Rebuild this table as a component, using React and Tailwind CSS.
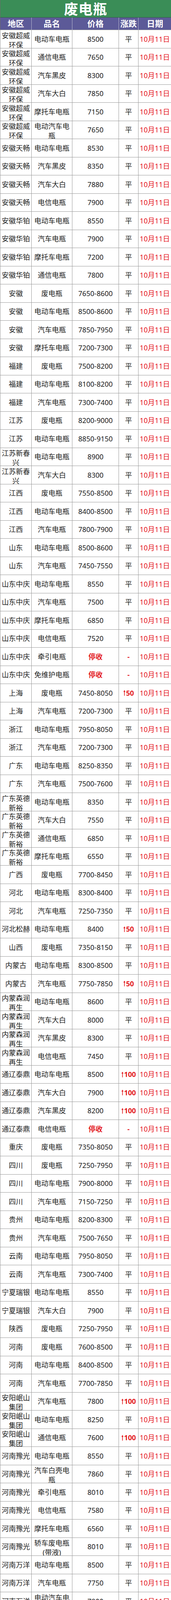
import React from "react";

const rows = [
  ["安徽超威环保", "电动车电瓶", "8500", "平"],
  ["安徽超威环保", "通信电瓶", "7650", "平"],
  ["安徽超威环保", "汽车黑皮", "8300", "平"],
  ["安徽超威环保", "汽车大白", "7850", "平"],
  ["安徽超威环保", "摩托车电瓶", "7150", "平"],
  ["安徽超威环保", "电动汽车电瓶", "7650", "平"],
  ["安徽天畅", "电动车电瓶", "8530", "平"],
  ["安徽天畅", "汽车黑皮", "8350", "平"],
  ["安徽天畅", "汽车大白", "7880", "平"],
  ["安徽天畅", "电信电瓶", "7900", "平"],
  ["安徽华铂", "电动车电瓶", "8550", "平"],
  ["安徽华铂", "汽车电瓶", "7900", "平"],
  ["安徽华铂", "摩托车电瓶", "7200", "平"],
  ["安徽华铂", "通信电瓶", "7800", "平"],
  ["安徽", "废电瓶", "7650-8600", "平"],
  ["安徽", "电动车电瓶", "8500-8600", "平"],
  ["安徽", "汽车电瓶", "7850-7950", "平"],
  ["安徽", "摩托车电瓶", "7200-7300", "平"],
  ["福建", "废电瓶", "7500-8200", "平"],
  ["福建", "电动车电瓶", "8100-8200", "平"],
  ["福建", "汽车电瓶", "7300-7400", "平"],
  ["江苏", "废电瓶", "8200-9000", "平"],
  ["江苏", "电动车电瓶", "8850-9150", "平"],
  ["江苏新春兴", "电动车电瓶", "8900", "平"],
  ["江苏新春兴", "汽车大白", "8300", "平"],
  ["江西", "废电瓶", "7550-8500", "平"],
  ["江西", "电动车电瓶", "8400-8500", "平"],
  ["江西", "汽车电瓶", "7800-7900", "平"],
  ["山东", "电动车电瓶", "8500-8600", "平"],
  ["山东", "汽车电瓶", "7450-7550", "平"],
  ["山东中庆", "电动车电瓶", "8550", "平"],
  ["山东中庆", "汽车电瓶", "7500", "平"],
  ["山东中庆", "摩托车电瓶", "6850", "平"],
  ["山东中庆", "电信电瓶", "7520", "平"],
  ["山东中庆", "牵引电瓶", "停收", "-"],
  ["山东中庆", "免维护电瓶", "停收", "-"],
  ["上海", "废电瓶", "7450-8050", "↑50"],
  ["上海", "汽车电瓶", "7200-7300", "平"],
  ["浙江", "电动车电瓶", "7950-8050", "平"],
  ["浙江", "汽车电瓶", "7200-7300", "平"],
  ["广东", "电动车电瓶", "8250-8350", "平"],
  ["广东", "汽车电瓶", "7500-7600", "平"],
  ["广东英德新裕", "电动车电瓶", "8350", "平"],
  ["广东英德新裕", "汽车大白", "7550", "平"],
  ["广东英德新裕", "通信电瓶", "6850", "平"],
  ["广东英德新裕", "摩托车电瓶", "6550", "平"],
  ["广西", "废电瓶", "7700-8450", "平"],
  ["河北", "电动车电瓶", "8300-8400", "平"],
  ["河北", "汽车电瓶", "7250-7350", "平"],
  ["河北松赫", "电动车电瓶", "8400", "↑50"],
  ["山西", "废电瓶", "7350-8150", "平"],
  ["内蒙古", "电动车电瓶", "8300-8500", "平"],
  ["内蒙古", "汽车电瓶", "7750-7850", "↑50"],
  ["内蒙森润再生", "电动车电瓶", "8600", "平"],
  ["内蒙森润再生", "汽车大白", "8000", "平"],
  ["内蒙森润再生", "汽车黑皮", "8300", "平"],
  ["内蒙森润再生", "电信电瓶", "7450", "平"],
  ["通辽泰鼎", "电动车电瓶", "8500", "↑100"],
  ["通辽泰鼎", "汽车大白", "7900", "↑100"],
  ["通辽泰鼎", "汽车黑皮", "8200", "↑100"],
  ["通辽泰鼎", "电信电瓶", "停收", "-"],
  ["重庆", "废电瓶", "7350-8050", "平"],
  ["四川", "废电瓶", "7250-7950", "平"],
  ["四川", "电动车电瓶", "7900-8000", "平"],
  ["四川", "汽车电瓶", "7150-7250", "平"],
  ["贵州", "电动车电瓶", "8200-8300", "平"],
  ["贵州", "汽车电瓶", "7500-7650", "平"],
  ["云南", "电动车电瓶", "7950-8050", "平"],
  ["云南", "汽车电瓶", "7300-7400", "平"],
  ["宁夏瑞银", "电动车电瓶", "8550", "平"],
  ["宁夏瑞银", "汽车大白", "7900", "平"],
  ["陕西", "废电瓶", "7250-7950", "平"],
  ["河南", "废电瓶", "7600-8500", "平"],
  ["河南", "电动车电瓶", "8400-8500", "平"],
  ["河南", "汽车电瓶", "7700-7850", "平"],
  ["安阳岷山集团", "汽车电瓶", "7800", "↑100"],
  ["安阳岷山集团", "电动车电瓶", "8250", "平"],
  ["安阳岷山集团", "通信电瓶", "7600", "↑100"],
  ["河南豫光", "电动车电瓶", "8550", "平"],
  ["河南豫光", "汽车白壳电瓶", "7860", "平"],
  ["河南豫光", "牵引电瓶", "8010", "平"],
  ["河南豫光", "电信电瓶", "7580", "平"],
  ["河南豫光", "摩托车电瓶", "6560", "平"],
  ["河南豫光", "轿车废电瓶(带液)", "8010", "平"],
  ["河南万洋", "电动车电瓶", "8500", "平"],
  ["河南万洋", "汽车电瓶", "7750", "平"],
  ["河南万洋", "电动汽车电瓶", "7900", "平"],
  ["河南万洋", "摩托车电瓶", "6450", "平"],
  ["河南万洋", "通信电瓶", "7500", "平"],
  ["河南万洋", "牵引电瓶", "7900", "平"],
];

const FONT = { fontFamily: '"Noto Sans", "Noto Sans CJK SC", sans-serif' };

const cellBase =
  "flex items-center justify-center text-center overflow-hidden border-r border-[#9a9a9a] leading-[24px]";

function UpArrow() {
  return (
    <svg width="6" height="15" viewBox="0 0 6 15" className="inline-block mr-[1px]">
      <path d="M3 3.5 V15" stroke="#e31b23" strokeWidth="1.6" fill="none" />
      <path d="M0.3 5.2 L3 0.5 L5.7 5.2 Z" fill="#e31b23" />
    </svg>
  );
}

function Row({ r }) {
  const [region, product, price, change] = r;
  const regionWrap = region.length > 4;
  const productWrap = product.length > 5;
  const stop = price === "停收";
  return (
    <div className="grid grid-cols-[80px_104px_119px_50px_84px] h-[46.5px] border-b border-[#9a9a9a] text-[18px] text-[#1c1c1c]">
      <div className={regionWrap ? cellBase + " pt-[6px]" : cellBase}>
        <span className="block w-full">{region}</span>
      </div>
      <div className={productWrap ? cellBase + " pt-[6px] px-[6px]" : cellBase + " px-[6px]"}>
        <span className="block w-full">{product}</span>
      </div>
      <div className={cellBase}>
        {stop ? (
          <span className="font-bold text-[#e31b23]">{price}</span>
        ) : (
          <span>{price}</span>
        )}
      </div>
      <div className={cellBase + " whitespace-nowrap"}>
        {change === "平" ? (
          <span>平</span>
        ) : change === "-" ? (
          <span className="font-bold text-[#e31b23]">-</span>
        ) : (
          <span className="flex items-center text-[#e31b23] font-bold tracking-[-0.3px]">
            <UpArrow />
            {change.slice(1)}
          </span>
        )}
      </div>
      <div className={cellBase + " whitespace-nowrap text-[#e5141e]"}>10月11日</div>
    </div>
  );
}

export default function App() {
  return (
    <div className="w-[437px] bg-white" style={FONT}>
      <div className="h-[45px] bg-[#3a8d57] flex items-center justify-center pt-[3px] border-b border-[#2f5f40] border-l border-l-[#6a6a6a]">
        <span className="text-white font-bold text-[36px] leading-none tracking-[1px]">废电瓶</span>
      </div>
      <div className="grid grid-cols-[80px_104px_119px_50px_84px] h-[31px] bg-[#5c5a98] text-white font-bold text-[21px] border-l border-[#6a6a6a]">
        <div className="flex items-center justify-center border-r border-[#b8b8d0]">地区</div>
        <div className="flex items-center justify-center border-r border-[#b8b8d0]">品名</div>
        <div className="flex items-center justify-center border-r border-[#b8b8d0]">价格</div>
        <div className="flex items-center justify-center border-r border-[#b8b8d0] whitespace-nowrap">涨跌</div>
        <div className="flex items-center justify-center">日期</div>
      </div>
      <div className="border-l border-[#9a9a9a] border-t border-t-[#9a9a9a]">
        {rows.map((r, i) => (
          <Row key={i} r={r} />
        ))}
      </div>
    </div>
  );
}
